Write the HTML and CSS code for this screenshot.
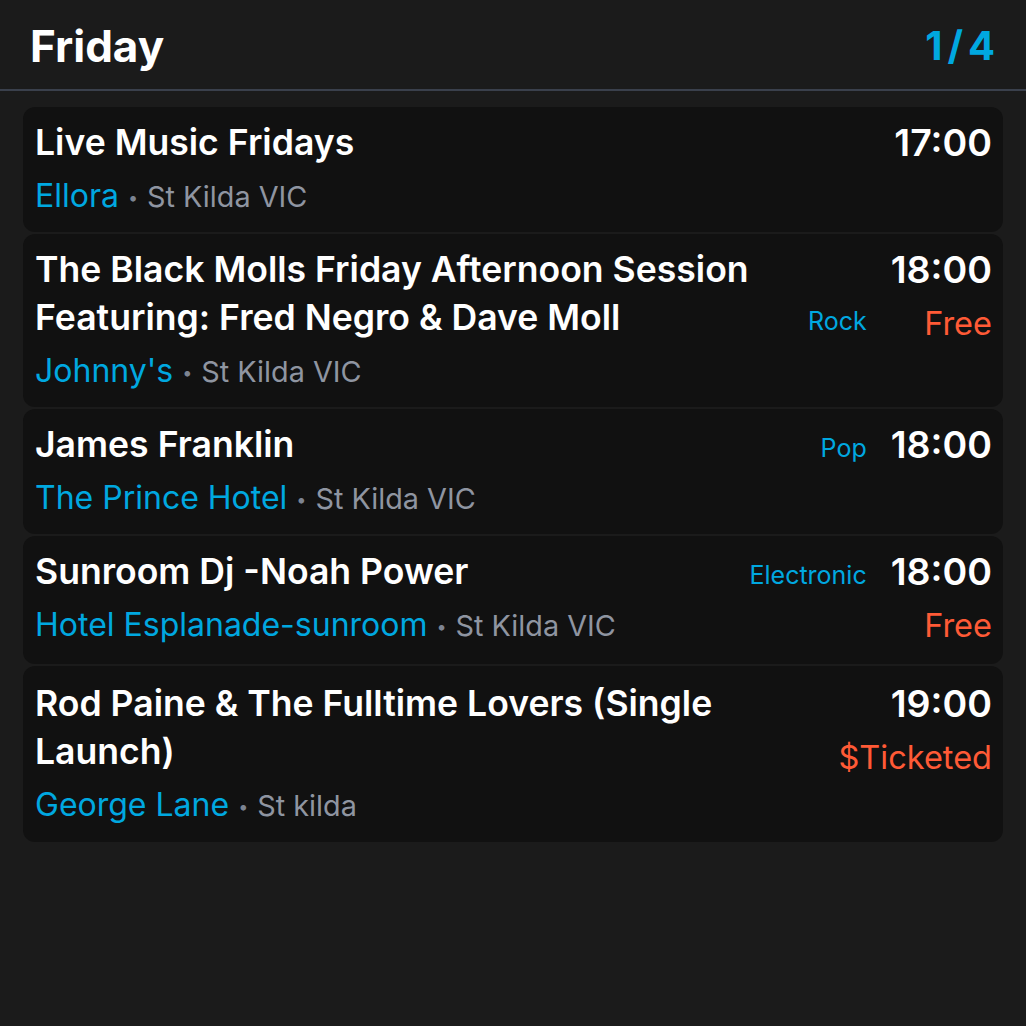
FILE: index.html
```html
<!DOCTYPE html>
<html lang="en">
<head>
<meta charset="utf-8">
<title>Friday</title>
<link rel="stylesheet" href="styles.css">
</head>
<body>
<header class="header">
  <h1 class="day">Friday</h1>
  <div class="pager">1/4</div>
</header>
<main class="list">
  <article class="card">
    <div class="main">
      <div class="title-row">
        <h2 class="title">Live Music Fridays</h2>
      </div>
      <div class="venue"><span class="venue-name">Ellora</span><span class="dot">•</span><span class="place">St Kilda VIC</span></div>
    </div>
    <div class="side">
      <div class="time">17:00</div>
    </div>
  </article>
  <article class="card">
    <div class="main">
      <div class="title-row">
        <h2 class="title">The Black Molls Friday Afternoon Session Featuring: Fred Negro &amp; Dave Moll</h2>
        <span class="genre">Rock</span>
      </div>
      <div class="venue"><span class="venue-name">Johnny's</span><span class="dot">•</span><span class="place">St Kilda VIC</span></div>
    </div>
    <div class="side">
      <div class="time">18:00</div>
      <div class="price">Free</div>
    </div>
  </article>
  <article class="card">
    <div class="main">
      <div class="title-row">
        <h2 class="title">James Franklin</h2>
        <span class="genre">Pop</span>
      </div>
      <div class="venue"><span class="venue-name">The Prince Hotel</span><span class="dot">•</span><span class="place">St Kilda VIC</span></div>
    </div>
    <div class="side">
      <div class="time">18:00</div>
    </div>
  </article>
  <article class="card">
    <div class="main">
      <div class="title-row">
        <h2 class="title">Sunroom Dj -Noah Power</h2>
        <span class="genre">Electronic</span>
      </div>
      <div class="venue"><span class="venue-name">Hotel Esplanade-sunroom</span><span class="dot">•</span><span class="place">St Kilda VIC</span></div>
    </div>
    <div class="side">
      <div class="time">18:00</div>
      <div class="price">Free</div>
    </div>
  </article>
  <article class="card card-tall">
    <div class="main">
      <div class="title-row">
        <h2 class="title">Rod Paine &amp; The Fulltime Lovers (Single Launch)</h2>
      </div>
      <div class="venue"><span class="venue-name">George Lane</span><span class="dot">•</span><span class="place">St kilda</span></div>
    </div>
    <div class="side">
      <div class="time">19:00</div>
      <div class="price">$Ticketed</div>
    </div>
  </article>
</main>
</body>
</html>
```
FILE: styles.css
```css
* { box-sizing: border-box; }
html, body {
  margin: 0;
  padding: 0;
  background: #1b1b1b;
  color: #ffffff;
  font-family: Inter, "Noto Sans", "Liberation Sans", sans-serif;
}
.header {
  display: flex;
  justify-content: space-between;
  align-items: center;
  height: 91px;
  padding: 2px 31px 0 30px;
  border-bottom: 2px solid #3a404c;
}
.day {
  margin: 0;
  font-size: 44px;
  font-weight: 700;
  line-height: 52px;
}
.pager {
  font-size: 40px;
  font-weight: 700;
  color: #00a8e0;
  line-height: 52px;
  letter-spacing: 5px;
  margin-right: -5px;
}
.list {
  display: flex;
  flex-direction: column;
  gap: 2px;
  padding: 16px 23px;
}
.card {
  display: flex;
  gap: 24px;
  background: #111111;
  border-radius: 12px;
  padding: 12px 11px 14px 12px;
}
.card-tall {
  padding-top: 14px;
  padding-bottom: 15px;
}
.main {
  flex: 1;
  min-width: 0;
}
.title-row {
  display: flex;
  align-items: last baseline;
  gap: 24px;
}
.title {
  flex: 1;
  margin: 0;
  font-size: 35.6px;
  font-weight: 600;
  line-height: 48px;
}
.genre {
  font-size: 25px;
  color: #00a8e0;
  line-height: 32px;
  white-space: nowrap;
}
.venue {
  display: flex;
  align-items: baseline;
  height: 44px;
  margin-top: 7px;
  white-space: nowrap;
}
.venue-name {
  font-size: 32px;
  line-height: 44px;
  color: #00a8e0;
}
.dot {
  font-size: 18px;
  line-height: 44px;
  color: #7d8492;
  margin: 0 9px;
  position: relative;
  top: -3px;
}
.place {
  font-size: 28.8px;
  line-height: 44px;
  color: #8f95a1;
}
.side {
  display: flex;
  flex-direction: column;
  align-items: flex-end;
}
.time {
  font-size: 37.5px;
  font-weight: 600;
  line-height: 48px;
}
.price {
  margin-top: 6px;
  font-size: 32.5px;
  line-height: 48px;
  color: #ff5a36;
  white-space: nowrap;
}
```
